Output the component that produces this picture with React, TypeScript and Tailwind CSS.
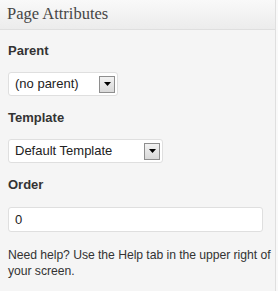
import React from "react";

const Arrow = () => (
  <span className="flex h-[17px] w-[16px] items-center justify-center border border-[#8e8e8e] bg-gradient-to-b from-[#f2f2f2] to-[#d9d9d9]">
    <svg width="7" height="4" viewBox="0 0 7 4">
      <polygon points="0,0 7,0 3.5,4" fill="#000" />
    </svg>
  </span>
);

const FakeSelect = ({ label, width }: { label: string; width: string }) => (
  <div
    className={`flex h-[24px] ${width} items-center justify-between rounded-[3px] border border-[#dfdfdf] bg-white pl-[6px] pr-[2px] text-[13px] text-[#222]`}
  >
    <span>{label}</span>
    <Arrow />
  </div>
);

export default function App() {
  return (
    <div className="h-[291px] w-[278px] bg-[#f9f9f9] font-['Liberation_Sans',Arial,sans-serif]">
      <div className="h-full w-[276px] border-r border-[#dfdfdf] bg-[#f5f5f5]">
        {/* header */}
        <div className="flex h-[30px] items-center border-b border-[#dfdfdf] bg-gradient-to-b from-[#f9f9f9] to-[#ececec] pl-[7px]">
          <h3 className="font-['Liberation_Serif',Georgia,serif] text-[16.5px] leading-none text-[#464646]">
            Page Attributes
          </h3>
        </div>

        <div className="px-[8px]">
          <p className="mt-[13px] text-[13px] font-bold leading-[16px] text-[#333]">Parent</p>
          <div className="mt-[13px]">
            <FakeSelect label="(no parent)" width="w-[110px]" />
          </div>

          <p className="mt-[14px] text-[13px] font-bold leading-[16px] text-[#333]">Template</p>
          <div className="mt-[13px]">
            <FakeSelect label="Default Template" width="w-[155px]" />
          </div>

          <p className="mt-[14px] text-[13px] font-bold leading-[16px] text-[#333]">Order</p>
          <div className="mt-[14px] flex h-[25px] w-[255px] items-center rounded-[3px] border border-[#dfdfdf] bg-white pl-[6px] text-[13px] text-[#222]">
            0
          </div>

          <p className="mt-[15px] whitespace-nowrap text-[12.2px] leading-[16px] tracking-[-0.05px] text-[#333]">
            Need help? Use the Help tab in the upper right of
            <br />
            your screen.
          </p>
        </div>
      </div>
    </div>
  );
}
